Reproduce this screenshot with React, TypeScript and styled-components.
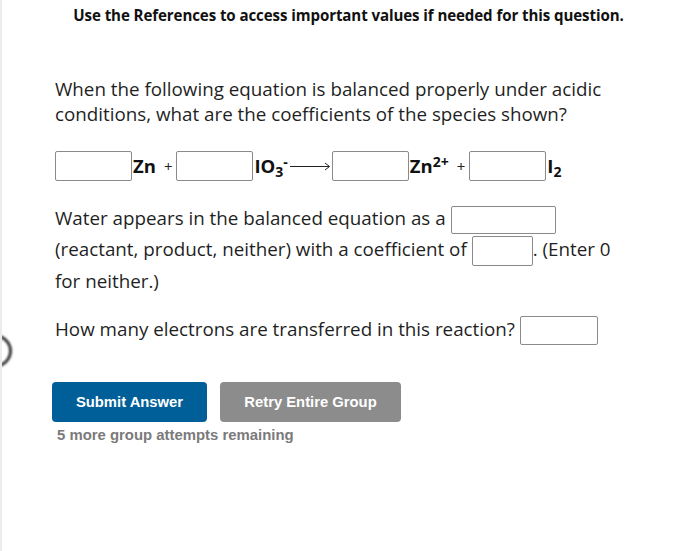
import React from "react";
import styled, { createGlobalStyle } from "styled-components";

const Global = createGlobalStyle`
  html, body { margin: 0; padding: 0; background: #ffffff; }
  body { font-family: "Open Sans", "DejaVu Sans", sans-serif; color: #1f1f1f; }
`;

const Page = styled.div`
  position: relative;
  width: 683px;
  height: 551px;
  box-sizing: border-box;
  border-left: 2px solid #ececec;
  overflow: hidden;
`;

const EdgeRing = styled.div`
  position: absolute;
  left: -26px;
  top: 334px;
  width: 30px;
  height: 28px;
  border-radius: 50%;
  border: 3px solid #333;
  filter: blur(1.2px);
`;

const Header = styled.div`
  padding-top: 5px;
  padding-left: 12px;
  text-align: center;
  font-weight: 700;
  font-size: 15.1px;
  line-height: 20px;
  color: #111;
  letter-spacing: -0.1px;
`;

const Content = styled.div`
  padding-left: 53px;
`;

const Question = styled.p`
  margin: 52px 0 0 0;
  font-size: 18.8px;
  line-height: 25px;
  width: 580px;
`;

const Equation = styled.div`
  margin-top: 24px;
  display: flex;
  align-items: center;
  height: 30px;
`;

const Box = styled.input<{ $w: number; $h?: number }>`
  box-sizing: border-box;
  width: ${(p) => p.$w}px;
  height: ${(p) => p.$h ?? 30}px;
  border: 1px solid #8a8a8a;
  border-radius: 2px;
  background: #fff;
  margin: 0;
  padding: 0;
  outline: none;
`;

const InlineBox = styled(Box)`
  vertical-align: middle;
`;

const Species = styled.span`
  font-weight: 700;
  font-size: 18.5px;
  color: #111;
  margin-left: 1px;
  line-height: 30px;
  white-space: nowrap;
`;

const Sub = styled.sub`
  font-size: 14px;
  vertical-align: -4px;
  line-height: 0;
`;

const Sup = styled.sup`
  font-size: 14px;
  vertical-align: 6px;
  line-height: 0;
`;

const Plus = styled.span`
  font-size: 15px;
  color: #222;
  margin: 0 4px 0 8px;
  line-height: 30px;
`;

const Arrow = styled.svg`
  margin: 0 2px 0 2px;
`;

const Para = styled.p<{ $mt: number; $lh: number }>`
  margin: ${(p) => p.$mt}px 0 0 0;
  font-size: 18.8px;
  line-height: ${(p) => p.$lh}px;
  width: 565px;
`;

const Buttons = styled.div`
  margin-top: 37px;
  display: flex;
  gap: 13px;
  margin-left: -3px;
`;

const Button = styled.button<{ $bg: string; $w: number }>`
  width: ${(p) => p.$w}px;
  height: 40px;
  border: none;
  border-radius: 4px;
  background: ${(p) => p.$bg};
  color: #fff;
  font-family: "Liberation Sans", Arial, sans-serif;
  font-weight: 700;
  font-size: 14.8px;
  padding: 0;
`;

const Remaining = styled.div`
  margin-top: 5px;
  margin-left: 2px;
  font-family: "Liberation Sans", Arial, sans-serif;
  font-weight: 700;
  font-size: 14.9px;
  line-height: 16px;
  color: #7a7a7a;
`;

export default function App() {
  return (
    <Page>
      <Global />
      <EdgeRing />
      <Header>Use the References to access important values if needed for this question.</Header>
      <Content>
        <Question>
          When the following equation is balanced properly under acidic conditions, what are the coefficients of the species shown?
        </Question>
        <Equation>
          <Box $w={77} />
          <Species>Zn</Species>
          <Plus>+</Plus>
          <Box $w={77} />
          <Species>
            IO<Sub>3</Sub>
            <Sup>-</Sup>
          </Species>
          <Arrow width="40" height="10" viewBox="0 0 40 10">
            <line x1="0" y1="5.5" x2="39" y2="5.5" stroke="#222" strokeWidth="1" />
            <path d="M35 2 L39.5 5.5 L35 9" fill="none" stroke="#222" strokeWidth="1" />
          </Arrow>
          <Box $w={77} />
          <Species>
            Zn<Sup>2+</Sup>
          </Species>
          <Plus>+</Plus>
          <Box $w={77} />
          <Species>
            I<Sub>2</Sub>
          </Species>
        </Equation>
        <Para $mt={22} $lh={30}>
          Water appears in the balanced equation as a <InlineBox $w={105} $h={28} />{" "}
          (reactant, product, neither) with a coefficient of <InlineBox $w={61} />. (Enter 0 for neither.)
        </Para>
        <Para $mt={18} $lh={30}>
          How many electrons are transferred in this reaction? <InlineBox $w={78} $h={29} />
        </Para>
        <Buttons>
          <Button $bg="#005f99" $w={155}>Submit Answer</Button>
          <Button $bg="#8c8c8c" $w={181}>Retry Entire Group</Button>
        </Buttons>
        <Remaining>5 more group attempts remaining</Remaining>
      </Content>
    </Page>
  );
}
